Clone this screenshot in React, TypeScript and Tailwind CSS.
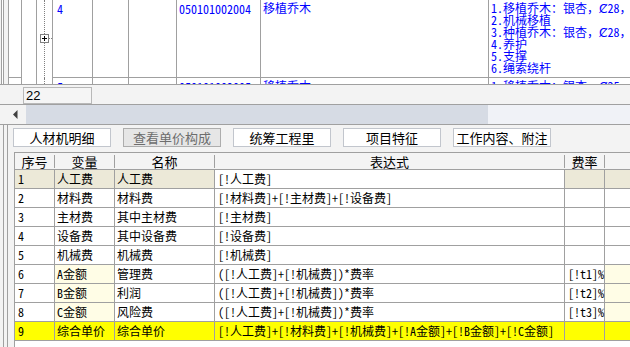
import React from "react";

const line = "bg-[#a0a0a0]";

function TopRow({
  h,
  num,
  code,
  name,
  desc,
  plus,
}: {
  h: string;
  num: string;
  code: string;
  name: string;
  desc: string[];
  plus?: boolean;
}) {
  return (
    <div className={`flex shrink-0 ${h}`}>
      <div className="w-[13px] shrink-0 border-l border-b border-[#a0a0a0]" />
      <div className="w-[15px] shrink-0 border-l border-[#a0a0a0]" />
      <div className="w-[16px] shrink-0 border-l border-[#a0a0a0] relative">
        <div className="absolute left-[7px] top-0 bottom-0 border-l border-dotted border-[#808080]" />
        {plus && (
          <>
            <div className="absolute left-[12px] top-[38px] w-[3px] border-t border-dotted border-[#808080]" />
            <div className="absolute left-[3px] top-[34px] w-[9px] h-[9px] border border-[#808080] bg-white">
              <div className="absolute left-[1px] top-[3px] w-[5px] h-[1px] bg-black" />
              <div className="absolute left-[3px] top-[1px] w-[1px] h-[5px] bg-black" />
            </div>
          </>
        )}
      </div>
      <div className="w-[40px] shrink-0 border-l border-b border-[#a0a0a0] pl-[4px] pt-[3px]">{num}</div>
      <div className="w-[36px] shrink-0 border-l border-b border-[#a0a0a0]" />
      <div className="w-[48px] shrink-0 border-l border-b border-[#a0a0a0]" />
      <div className="w-[84px] shrink-0 border-l border-b border-[#a0a0a0] pl-[2px] pt-[3px] whitespace-nowrap">{code}</div>
      <div className="w-[228px] shrink-0 border-l border-b border-[#a0a0a0] pl-[2px] pt-[2px] whitespace-nowrap">
        {name}
      </div>
      <div className="w-[200px] shrink-0 border-l border-b border-[#a0a0a0] pl-[2px] pt-[2px] whitespace-nowrap">
        {desc.map((d, i) => (
          <div key={i} className="h-[12px]">
            {d}
          </div>
        ))}
      </div>
    </div>
  );
}

type Row = {
  no: string;
  v: string;
  name: string;
  expr: string;
  rate: string;
  kind: "sel" | "plain" | "amt" | "total";
};

const rows: Row[] = [
  { no: "1", v: "人工费", name: "人工费", expr: "[!人工费]", rate: "", kind: "sel" },
  { no: "2", v: "材料费", name: "材料费", expr: "[!材料费]+[!主材费]+[!设备费]", rate: "", kind: "plain" },
  { no: "3", v: "主材费", name: "其中主材费", expr: "[!主材费]", rate: "", kind: "plain" },
  { no: "4", v: "设备费", name: "其中设备费", expr: "[!设备费]", rate: "", kind: "plain" },
  { no: "5", v: "机械费", name: "机械费", expr: "[!机械费]", rate: "", kind: "plain" },
  { no: "6", v: "A金额", name: "管理费", expr: "([!人工费]+[!机械费])*费率", rate: "[!t1]%", kind: "amt" },
  { no: "7", v: "B金额", name: "利润", expr: "([!人工费]+[!机械费])*费率", rate: "[!t2]%", kind: "amt" },
  { no: "8", v: "C金额", name: "风险费", expr: "([!人工费]+[!机械费])*费率", rate: "[!t3]%", kind: "amt" },
  {
    no: "9",
    v: "综合单价",
    name: "综合单价",
    expr: "[!人工费]+[!材料费]+[!机械费]+[!A金额]+[!B金额]+[!C金额]",
    rate: "",
    kind: "total",
  },
];

function BodyRow({ r }: { r: Row }) {
  const base =
    r.kind === "total" ? "bg-[#ffff00]" : r.kind === "sel" ? "bg-[#ece9d8]" : "bg-white";
  const exprBg = r.kind === "total" ? "bg-[#ffff00]" : "bg-white";
  const varBg =
    r.kind === "total"
      ? "bg-[#ffff00]"
      : r.kind === "sel"
      ? "bg-[#ece9d8]"
      : r.kind === "amt"
      ? "bg-[#fffde6]"
      : "bg-white";
  const cell = "h-full border-r border-[#a0a0a0] flex items-center shrink-0 whitespace-nowrap";
  return (
    <div className="flex h-[19px] border-b border-[#a0a0a0]">
      <div className={`${cell} w-[40px] pl-[3px] ${base}`}>{r.no}</div>
      <div className={`${cell} w-[60px] pl-[2px] ${varBg}`}>{r.v}</div>
      <div className={`${cell} w-[100px] pl-[2px] ${base}`}>{r.name}</div>
      <div className={`${cell} w-[350px] pl-[3px] ${exprBg}`}>{r.expr}</div>
      <div className={`${cell} w-[40px] pl-[3px] ${base}`}>{r.rate}</div>
      <div className={`h-full flex-1 ${varBg}`} />
    </div>
  );
}

function HeadCell({ w, label }: { w: string; label: string }) {
  return (
    <div className={`${w} shrink-0 h-full flex`}>
      <div className="flex-1 flex items-center justify-center">{label}</div>
      <div className={`w-[1px] h-[13px] mt-[2px] ${line}`} />
    </div>
  );
}

function Btn({ label, disabled }: { label: string; disabled?: boolean }) {
  return (
    <div
      className={`w-[98px] h-[19px] shrink-0 border flex items-center justify-center text-[13px] leading-[13px] ${
        disabled
          ? "bg-[#e6e6e6] border-[#adadad] text-[#6d6d6d]"
          : "bg-white border-[#c2c6cd] text-black"
      }`}
    >
      {label}
    </div>
  );
}

export default function App() {
  return (
    <div className="w-[630px] h-[347px] overflow-hidden bg-[#f3f3f3] text-black font-['Noto_Sans_Mono_CJK_SC','Noto_Sans_CJK_SC','DejaVu_Sans',monospace] text-[12px] leading-[12px] flex flex-col">
      {/* upper grid */}
      <div className="h-[85px] shrink-0 flex border-b border-[#a0a0a0]">
        <div className="w-[8px] shrink-0 flex">
          <div className="w-[1px]" />
          <div className={`w-[1px] ${line}`} />
          <div className="w-[1px] bg-white" />
          <div className={`w-[1px] ${line}`} />
        </div>
        <div className="flex-1 bg-white overflow-hidden flex flex-col text-[#0000ff]">
          <TopRow
            h="h-[78px]"
            num="4"
            code="050101002004"
            name="移植乔木"
            plus
            desc={[
              "1.移植乔木：银杏，Ȼ28，高",
              "2.机械移植",
              "3.种植乔木：银杏，Ȼ28，高",
              "4.养护",
              "5.支撑",
              "6.绳索绕杆",
            ]}
          />
          <TopRow
            h="h-[40px]"
            num="5"
            code="050101002005"
            name="移植乔木"
            desc={["1.移植乔木：银杏，Ȼ25，高", "2.机械移植"]}
          />
        </div>
      </div>

      {/* input bar */}
      <div className="h-[20px] shrink-0 border-b border-[#a0a0a0] flex items-start">
        <div className="ml-[23px] mt-[2px] w-[69px] h-[17px] border border-[#b8b8b8] bg-[#f5f5f5] pl-[2px] flex items-center font-['Liberation_Sans',sans-serif] text-[13px]">
          22
        </div>
      </div>

      {/* scrollbar */}
      <div className="h-[20px] shrink-0 border-b border-[#a0a0a0] flex">
        <div className="w-[26px] shrink-0 flex items-center pl-[13px]">
          <svg width="5" height="9" viewBox="0 0 5 9">
            <polygon points="4.5,0 0,4.5 4.5,9" fill="#404040" />
          </svg>
        </div>
        <div className="w-[462px] shrink-0 bg-[#d6dbe4]" />
        <div className="flex-1 bg-[#f0f2f7]" />
      </div>

      {/* lower panel */}
      <div className="flex-1 flex min-h-0">
        <div className="w-[10px] shrink-0 flex">
          <div className="w-[3px]" />
          <div className={`w-[1px] ${line}`} />
          <div className="w-[3px]" />
          <div className={`w-[1px] ${line}`} />
        </div>
        <div className="flex-1 flex flex-col min-w-0">
          <div className="flex gap-[12px] ml-[3px] mt-[3px]">
            <Btn label="人材机明细" />
            <Btn label="查看单价构成" disabled />
            <Btn label="统筹工程里" />
            <Btn label="项目特征" />
            <Btn label="工作内容、附注" />
          </div>
          <div className="ml-[4px] mt-[5px] flex-1 border-t border-l border-[#a0a0a0] bg-white flex flex-col text-[13px] leading-[13px]">
            <div className="h-[17px] shrink-0 flex border-b border-[#a0a0a0] bg-[#f4f4f4]">
              <HeadCell w="w-[40px]" label="序号" />
              <HeadCell w="w-[60px]" label="变量" />
              <HeadCell w="w-[100px]" label="名称" />
              <HeadCell w="w-[350px]" label="表达式" />
              <HeadCell w="w-[40px]" label="费率" />
              <div className="flex-1" />
            </div>
            <div className="text-[12px] leading-[12px]">
              {rows.map((r) => (
                <BodyRow key={r.no} r={r} />
              ))}
            </div>
          </div>
        </div>
      </div>
    </div>
  );
}
